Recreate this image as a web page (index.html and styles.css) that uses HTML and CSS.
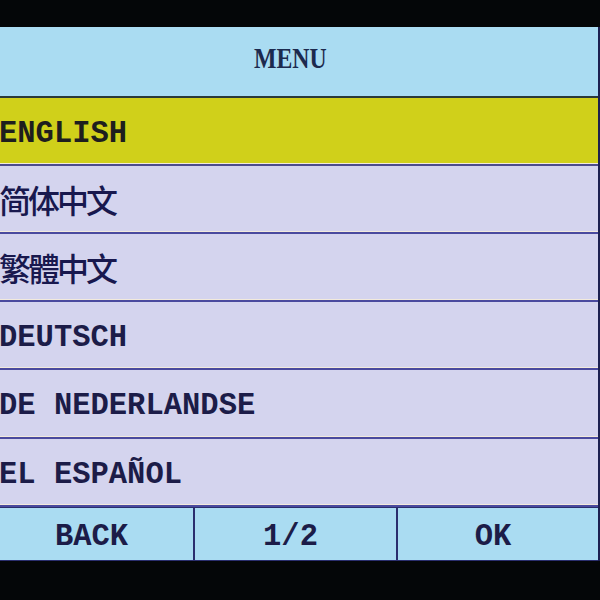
FILE: index.html
```html
<!DOCTYPE html>
<html>
<head>
<meta charset="utf-8">
<link rel="stylesheet" href="styles.css">
</head>
<body>
<div class="bezel-top"></div>
<div class="screen">
  <div class="header"><span class="title">MENU</span></div>
  <div class="list">
    <div class="row selected">ENGLISH</div>
    <div class="row cjk">简体中文</div>
    <div class="row cjk">繁體中文</div>
    <div class="row">DEUTSCH</div>
    <div class="row tall">DE NEDERLANDSE</div>
    <div class="row">EL ESPAÑOL</div>
  </div>
  <div class="footer">
    <div class="btn">BACK</div>
    <div class="btn">1/2</div>
    <div class="btn">OK</div>
  </div>
</div>
</body>
</html>
```
FILE: styles.css
```css
html, body {
  margin: 0;
  padding: 0;
  background: #040608;
  width: 600px;
  height: 600px;
  overflow: hidden;
}
.bezel-top {
  height: 27px;
}
.screen {
  width: 598px;
  border-right: 2px solid #1c2050;
  display: flex;
  flex-direction: column;
  font-family: "Liberation Mono", "Noto Sans CJK SC", monospace;
  font-weight: bold;
  color: #1c1c48;
}
.header {
  height: 71px;
  box-sizing: border-box;
  background: #aadcf2;
  border-bottom: 2px solid #2a3a3a;
  display: flex;
  align-items: center;
  justify-content: center;
  padding: 0 18px 7px 0;
}
.title {
  display: inline-block;
  font-family: "Liberation Serif", serif;
  font-weight: bold;
  font-size: 29px;
  color: #1c2a4e;
  transform: scaleX(0.82);
}
.list {
  display: flex;
  flex-direction: column;
}
.row {
  height: 68px;
  box-sizing: border-box;
  background: #d4d4ee;
  border-bottom: 2px solid #4a4a9e;
  box-shadow: inset 0 -1px 0 #f2eadc;
  display: flex;
  align-items: center;
  font-size: 30.5px;
  letter-spacing: 0;
  padding: 5px 0 0 0;
  margin-left: -1px;
}
.row.tall {
  height: 69px;
}
.row.selected {
  background: #d0d01a;
  border-bottom-color: #4c4c8c;
  color: #1e1e1e;
}
.row.cjk {
  font-family: "Noto Sans CJK SC", sans-serif;
  font-weight: 500;
  font-size: 32px;
  letter-spacing: -3px;
  color: #18184e;
  padding: 0 0 1px 0;
}
.footer {
  height: 54px;
  box-sizing: border-box;
  background: #aadcf2;
  border-top: 1px solid #2a2e6e;
  border-bottom: 1px solid #2a2e6e;
  display: grid;
  grid-template-columns: 195px 203px 1fr;
}
.btn {
  display: flex;
  align-items: center;
  justify-content: center;
  font-size: 30.5px;
  padding: 5px 10px 0 0;
  border-right: 2px solid #2a2e6e;
}
.btn:last-child {
  border-right: none;
}
```
